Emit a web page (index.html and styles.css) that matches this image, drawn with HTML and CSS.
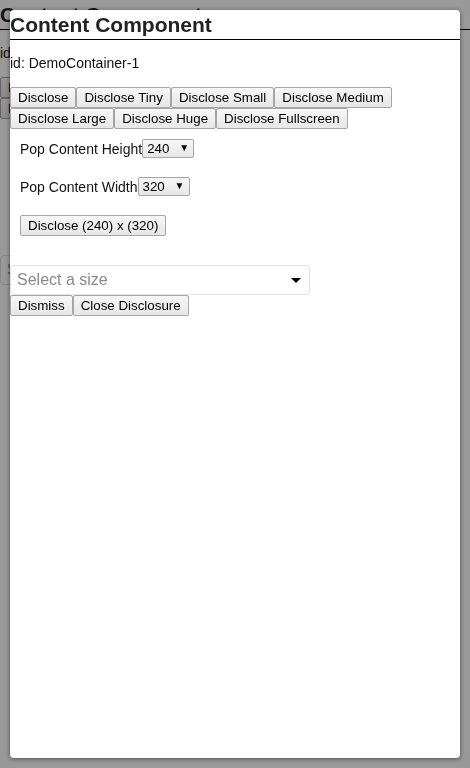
FILE: index.html
```html
<!DOCTYPE html>
<html>
<head>
<meta charset="utf-8">
<title>Content Component</title>
<link rel="stylesheet" href="styles.css">
</head>
<body>
<div class="page">
  <div class="component">
    <h1 class="title">Content Component</h1>
    <div class="ident">id: DemoContainer</div>
    <div class="actions"><button class="btn">Disclose</button><button class="btn">Disclose Tiny</button><button class="btn">Disclose Small</button><button class="btn">Disclose Medium</button><button class="btn">Disclose Large</button><button class="btn">Disclose Huge</button><button class="btn">Disclose Fullscreen</button></div>
    <div class="pop">
      <div class="pop-row"><span class="pop-label">Pop Content Height</span><span class="sel-wrap"><select class="num-select"><option>120</option><option selected>240</option><option>320</option><option>480</option></select></span></div>
      <div class="pop-row"><span class="pop-label">Pop Content Width</span><span class="sel-wrap"><select class="num-select"><option>120</option><option>240</option><option selected>320</option><option>480</option></select></span></div>
      <div class="pop-row"><button class="btn">Disclose (240) x (320)</button></div>
    </div>
    <div class="size-select"><span class="size-placeholder">Select a size</span><span class="caret"></span></div>
  </div>
</div>
<div class="overlay"></div>
<div class="modal">
  <div class="component">
    <h1 class="title">Content Component</h1>
    <div class="ident">id: DemoContainer-1</div>
    <div class="actions"><button class="btn">Disclose</button><button class="btn">Disclose Tiny</button><button class="btn">Disclose Small</button><button class="btn">Disclose Medium</button><button class="btn">Disclose Large</button><button class="btn">Disclose Huge</button><button class="btn">Disclose Fullscreen</button></div>
    <div class="pop">
      <div class="pop-row"><span class="pop-label">Pop Content Height</span><span class="sel-wrap"><select class="num-select"><option>120</option><option selected>240</option><option>320</option><option>480</option></select></span></div>
      <div class="pop-row"><span class="pop-label">Pop Content Width</span><span class="sel-wrap"><select class="num-select"><option>120</option><option>240</option><option selected>320</option><option>480</option></select></span></div>
      <div class="pop-row"><button class="btn">Disclose (240) x (320)</button></div>
    </div>
    <div class="size-select"><span class="size-placeholder">Select a size</span><span class="caret"></span></div>
    <div class="actions actions-tight"><button class="btn">Dismiss</button><button class="btn">Close Disclosure</button></div>
  </div>
</div>
</body>
</html>
```
FILE: styles.css
```css
html, body {
  margin: 0;
  padding: 0;
  background: #fff;
}
body {
  font-family: "Liberation Sans", Arial, sans-serif;
  font-size: 14px;
  color: #000;
  width: 470px;
  height: 768px;
  overflow: hidden;
}
.component {
  display: flex;
  flex-direction: column;
  align-items: stretch;
}
.title {
  margin: 0;
  padding: 3px 0 2px;
  font-size: 21px;
  line-height: 24px;
  font-weight: bold;
  color: #222;
  border-bottom: 1px solid #000;
}
.ident {
  margin-top: 15px;
  line-height: 16px;
  height: 16px;
  color: #111;
}
.actions {
  display: flex;
  flex-wrap: wrap;
  margin-top: 16px;
}
.actions-tight {
  margin-top: 0;
}
.btn {
  -webkit-appearance: none;
  appearance: none;
  font-family: "Liberation Sans", Arial, sans-serif;
  font-size: 13.333px;
  line-height: 15px;
  height: 21px;
  box-sizing: border-box;
  margin: 0;
  padding: 2px 7px;
  color: #000;
  border: 1px solid #a6a6a6;
  border-radius: 2px;
  background: linear-gradient(#f7f7f7, #e7e7e7);
}
.pop {
  display: flex;
  flex-direction: column;
  gap: 19px;
  padding: 10px 10px 0;
}
.pop-row {
  display: flex;
  align-items: center;
  height: 19px;
}
.pop-row:last-child {
  height: 21px;
}
.pop-label {
  line-height: 16px;
  color: #111;
}
.sel-wrap {
  position: relative;
  display: inline-block;
}
.num-select {
  -webkit-appearance: none;
  appearance: none;
  display: block;
  font-family: "Liberation Sans", Arial, sans-serif;
  font-size: 13.333px;
  line-height: 15px;
  width: 52px;
  height: 19px;
  box-sizing: border-box;
  margin: 0;
  padding: 1px 0 1px 4px;
  color: #000;
  border: 1px solid #a6a6a6;
  border-radius: 2px;
  background: linear-gradient(#f7f7f7, #e7e7e7);
}
.sel-wrap::after {
  content: "\25BC";
  position: absolute;
  right: 5px;
  top: 4px;
  font-size: 10px;
  line-height: 10px;
  color: #000;
  pointer-events: none;
}
.size-select {
  margin-top: 29px;
  width: 300px;
  height: 30px;
  box-sizing: border-box;
  border: 1px solid #e2e2e2;
  border-radius: 4px;
  background: #fff;
  display: flex;
  align-items: center;
  justify-content: space-between;
  padding: 0 8px 0 6px;
}
.size-placeholder {
  font-size: 16px;
  color: #8a8a8a;
}
.caret {
  width: 0;
  height: 0;
  border-left: 5px solid transparent;
  border-right: 5px solid transparent;
  border-top: 5px solid #000;
}
.overlay {
  position: fixed;
  inset: 0;
  background: rgba(0, 0, 0, 0.4);
}
.modal {
  position: fixed;
  top: 10px;
  left: 10px;
  right: 10px;
  bottom: 10px;
  background: #fff;
  border-radius: 4px;
  box-shadow: 0 1px 5px rgba(0, 0, 0, 0.5);
  overflow: hidden;
}
```
